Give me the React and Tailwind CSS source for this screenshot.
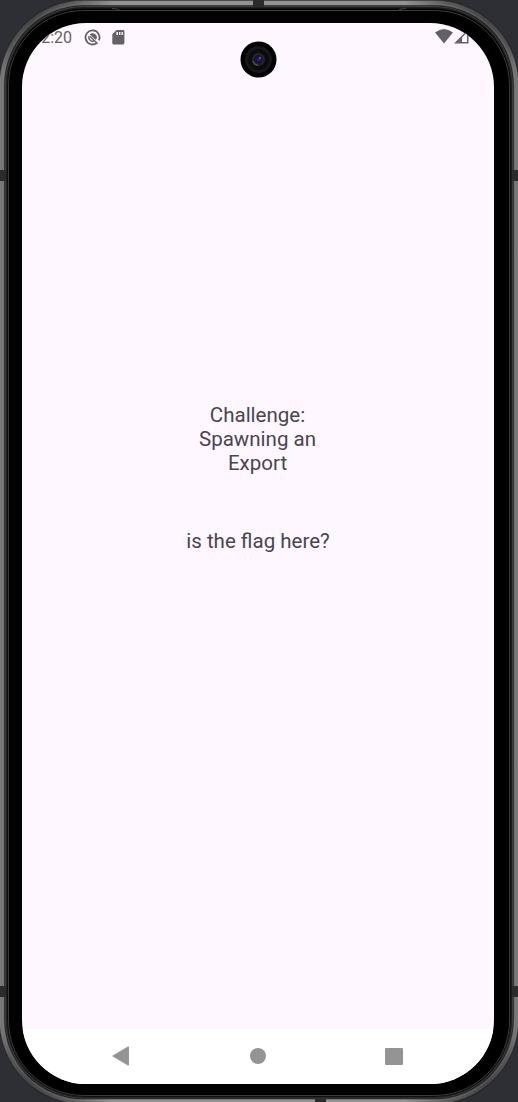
import React from "react";

function Bezel() {
  return (
    <svg className="absolute inset-0" width="518" height="1102" viewBox="0 0 518 1102" fill="none">
      <defs>
        <linearGradient id="metal" x1="0" y1="0" x2="518" y2="0" gradientUnits="userSpaceOnUse">
          <stop offset="0" stopColor="#7c7c7c" />
          <stop offset=".02" stopColor="#555" />
          <stop offset=".06" stopColor="#464646" />
          <stop offset=".14" stopColor="#5c5c5c" />
          <stop offset=".22" stopColor="#929292" />
          <stop offset=".78" stopColor="#929292" />
          <stop offset=".86" stopColor="#5c5c5c" />
          <stop offset=".94" stopColor="#464646" />
          <stop offset=".98" stopColor="#555" />
          <stop offset="1" stopColor="#7c7c7c" />
        </linearGradient>
      </defs>
      <rect x="-1" y="-1" width="520" height="1106" rx="85" fill="#202020" />
      <rect x="0" y=".5" width="518" height="1103" rx="84" stroke="#343434" strokeWidth="2" />
      <rect x="2" y="3" width="514" height="1098.500" rx="82" stroke="url(#metal)" strokeWidth="4.500" />
      <rect x="3" y="4" width="512" height="1096.500" rx="81" stroke="#a5a5a5" strokeOpacity=".2" />
      <rect x="5.500" y="6.500" width="507" height="1091.500" rx="79" stroke="#3d3d3d" />
      <rect x="7" y="8" width="504" height="1089" rx="77" fill="#000" stroke="#1f1f1f" />
      <rect x="8.500" y="10.500" width="501" height="1085" rx="75" stroke="#4a4a4a" strokeWidth=".8" />
      <path d="M112 8.500Q118 8.500 120 10.500H398Q400 8.500 406 8.500" stroke="#444" />
      <path d="M253 0h11v7h-11zM0 170h6v11H0zM512 170h6v11h-6zM0 986h6v11H0zM512 986h6v11h-6zM315 1099h11v3h-11z" fill="#2b2b2b" />
    </svg>
  );
}

function Camera() {
  return (
    <svg className="absolute left-[240px] top-[41px]" width="37" height="37" viewBox="0 0 37 37">
      <defs>
        <radialGradient id="lens">
          <stop offset="0" stopColor="#35206f" />
          <stop offset=".45" stopColor="#111434" />
          <stop offset="1" stopColor="#292929" />
        </radialGradient>
      </defs>
      <circle cx="18.500" cy="18.500" r="18" fill="#000" />
      <circle cx="18.500" cy="18.500" r="12" fill="#0b0b0b" stroke="#171717" strokeWidth="3" />
      <circle cx="18.500" cy="18.500" r="6.500" fill="url(#lens)" />
      <circle cx="20" cy="17" r="1.200" fill="#6240b0" />
      <path d="M12.800 20Q14 24 18 24.300" stroke="#4c4c4c" fill="none" strokeWidth="1.500" />
    </svg>
  );
}

function StatusBar() {
  return (
    <div className="flex h-7 items-center pl-[9px] pr-[25px] text-[#636165]">
      <span className="w-[41px] pt-px text-right text-[16px] leading-7">12:20</span>
      <svg className="ml-[12px] shrink-0" width="17" height="17" viewBox="0 0 17 17" fill="none" stroke="currentColor">
        <path d="M12.500 14.200A7 7 0 1 1 14.900 11.300" strokeWidth="1.800" />
        <path d="M5.700 5.200A4.400 4.400 0 0 1 12.700 9.800L11.600 10.700Z" fill="currentColor" stroke="none" />
        <path d="M5.700 7L13.700 14.700" strokeWidth="1.300" />
        <path d="M4.800 7.300A4.200 4.200 0 0 0 10.300 12" strokeWidth="1.500" />
      </svg>
      <svg className="ml-[11px] shrink-0" width="13" height="15" viewBox="0 0 13 15">
        <path fill="currentColor" fillRule="evenodd" d="M4.600 0H11Q12.400 0 12.400 1.400V13Q12.400 14.400 11 14.400H1.600Q.3 14.400.3 13V4.300ZM4.400 2V5H5.900V2ZM7 2V5H8.400V2ZM9.500 2V5H10.900V2Z" />
      </svg>
      <svg className="ml-auto shrink-0 -translate-y-px" width="18" height="15" viewBox="0 0 18 15">
        <path d="M0 3.500Q9-3.500 18 3.500L9 14.500Z" fill="currentColor" />
      </svg>
      <svg className="ml-px shrink-0 -translate-y-px" width="15" height="15" viewBox="0 0 15 15">
        <path fill="currentColor" fillRule="evenodd" d="M0 14.500L14.500 0V14.500ZM8 8.500V13H13V3.500Z" />
      </svg>
    </div>
  );
}

function NavigationBar() {
  return (
    <div className="flex h-[55px] items-center justify-between bg-white pb-px pl-[90px] pr-[91px] text-[#949494]">
      <svg width="18" height="20" viewBox="0 0 18 20" fill="currentColor"><path d="M0 10L15.500.700Q17 .300 17 1.500V18.500Q17 19.700 15.500 19.300Z" /></svg>
      <div className="ml-px size-4 rounded-full bg-[#949494]" />
      <div className="h-[17px] w-[18px] rounded-[1px] bg-[#949494]" />
    </div>
  );
}

export default function App() {
  return (
    <div className="relative h-[1102px] w-[518px] overflow-hidden bg-[#2e2f34] pl-[22px] pt-[23px] font-['Roboto',sans-serif]">
      <Bezel />
      <main className="relative flex h-[1061px] w-[472px] flex-col overflow-hidden rounded-[64px] bg-[#fef7ff]">
        <StatusBar />
        <div className="flex flex-1 flex-col items-center pt-[352px] text-center text-[20.500px] leading-6 text-[#49454f]">
          <p className="mr-px w-[130px]">Challenge:<br />Spawning an<br />Export</p>
          <p className="mt-[54px]">is the flag here?</p>
        </div>
        <NavigationBar />
      </main>
      <Camera />
    </div>
  );
}
